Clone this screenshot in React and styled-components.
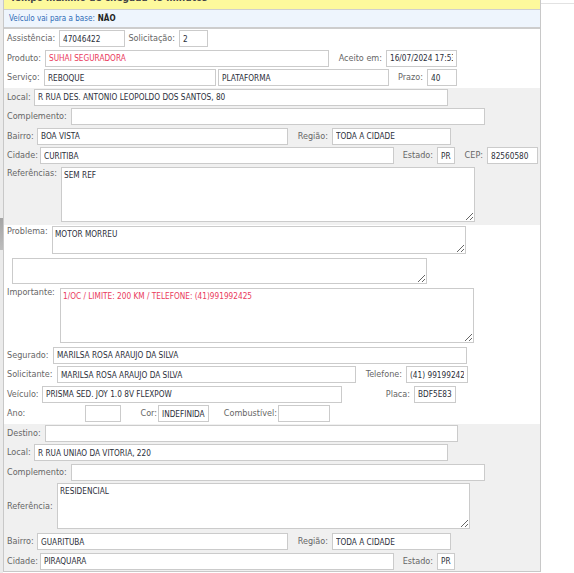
import React from "react";
import styled, { createGlobalStyle } from "styled-components";

const Global = createGlobalStyle`
  html, body { margin: 0; padding: 0; background: #fff; overflow: hidden; }
  body { font-family: "DejaVu Sans Condensed", "DejaVu Sans", sans-serif; font-size: 9px; }
`;

const Page = styled.div`
  display: flex;
  width: 574px;
  height: 573px;
`;

const SideStrip = styled.div`
  width: 3px;
  flex-shrink: 0;
  background: #ebebeb;
`;

const StripThumb = styled.div`
  margin-top: 218px;
  height: 32px;
  background: linear-gradient(#a4a4a4, #bdbdbd);
`;

const Panel = styled.div`
  width: 536px;
  flex-shrink: 0;
  border-left: 1px solid #c8c8c8;
  border-right: 1px solid #c8c8c8;
  align-self: flex-start;
`;

const RightArea = styled.div`
  flex: 1;
  margin-top: 3px;
  height: 0;
  border-top: 1px solid #e2e2e2;
`;

const Banner = styled.div`
  height: 9px;
  overflow: hidden;
  background: #fdf99c;
  border-bottom: 1px solid #cfcfcf;
`;

const BannerText = styled.div`
  margin-top: -9px;
  padding-left: 6px;
  line-height: 14px;
  font-weight: bold;
  font-size: 10px;
  color: #444;
`;

const Info = styled.div`
  height: 17px;
  display: flex;
  align-items: center;
  padding-left: 5px;
  background: #eef5fd;
  border-bottom: 2px solid #cdcdcd;
  font-size: 8px;
  color: #2f6cb8;
  b { color: #222; margin-left: 3px; }
`;

const Section = styled.div`
  background: ${(p) => (p.$gray ? "#f0f0f0" : "#fff")};
  border-bottom: ${(p) => (p.$last ? "1px solid #c8c8c8" : "none")};
`;

const Row = styled.div`
  display: flex;
  align-items: ${(p) => p.$align || "center"};
  height: ${(p) => p.$h || 19.5}px;
  padding-left: 3px;
`;

const Label = styled.div`
  width: ${(p) => p.$w}px;
  flex-shrink: 0;
  color: #666;
  white-space: nowrap;
  line-height: 11px;
  text-align: ${(p) => (p.$right ? "right" : "left")};
  padding-right: ${(p) => (p.$right ? (p.$pr ?? 4) : 0)}px;
  padding-top: ${(p) => p.$pt || 0}px;
  box-sizing: border-box;
`;

const Input = styled.input`
  width: ${(p) => p.$w}px;
  height: 17px;
  flex-shrink: 0;
  box-sizing: border-box;
  margin: 0;
  border: 1px solid #cbcbcb;
  background: #fff;
  padding: 0 3px;
  font-family: inherit;
  font-size: 8.2px;
  color: ${(p) => (p.$red ? "#ea3a5c" : "#2c2f3a")};
  outline: none;
`;

const Area = styled.textarea`
  width: ${(p) => p.$w}px;
  height: ${(p) => p.$h}px;
  flex-shrink: 0;
  box-sizing: border-box;
  margin: 1.25px 0 0 0;
  border: 1px solid #cbcbcb;
  background: #fff;
  padding: 2px 2px;
  font-family: inherit;
  font-size: 8.2px;
  line-height: 11px;
  color: ${(p) => (p.$red ? "#ea3a5c" : "#2c2f3a")};
  outline: none;
`;

const L = (props) => <Label {...props} />;

export default function App() {
  return (
    <>
      <Global />
      <Page>
        <SideStrip>
          <StripThumb />
        </SideStrip>
        <Panel>
          <Banner>
            <BannerText>Tempo máximo de chegada 45 minutos</BannerText>
          </Banner>
          <Info>
            Veículo vai para a base: <b>NÃO</b>
          </Info>

          <Section>
            <Row>
              <L $w={52}>Assistência:</L>
              <Input readOnly $w={66} value="47046422" />
              <L $w={54} $right>Solicitação:</L>
              <Input readOnly $w={29} value="2" />
            </Row>
            <Row>
              <L $w={38}>Produto:</L>
              <Input readOnly $w={284} $red value="SUHAI SEGURADORA" />
              <L $w={57} $right>Aceito em:</L>
              <Input readOnly $w={71} value="16/07/2024 17:53" />
            </Row>
            <Row>
              <L $w={37}>Serviço:</L>
              <Input readOnly $w={172} value="REBOQUE" />
              <L $w={2} />
              <Input readOnly $w={171} value="PLATAFORMA" />
              <L $w={38} $right>Prazo:</L>
              <Input readOnly $w={30} value="40" />
            </Row>
          </Section>

          <Section $gray>
            <Row>
              <L $w={27}>Local:</L>
              <Input readOnly $w={414} value="R RUA DES. ANTONIO LEOPOLDO DOS SANTOS, 80" />
            </Row>
            <Row>
              <L $w={64}>Complemento:</L>
              <Input readOnly $w={414} value="" />
            </Row>
            <Row>
              <L $w={30}>Bairro:</L>
              <Input readOnly $w={251} value="BOA VISTA" />
              <L $w={44} $right>Região:</L>
              <Input readOnly $w={119} value="TODA A CIDADE" />
            </Row>
            <Row>
              <L $w={33}>Cidade:</L>
              <Input readOnly $w={354} value="CURITIBA" />
              <L $w={43} $right>Estado:</L>
              <Input readOnly $w={18} value="PR" />
              <L $w={32} $right>CEP:</L>
              <Input readOnly $w={51} value="82560580" />
            </Row>
            <Row $h={59} $align="flex-start">
              <L $w={54} $pt={2}>Referências:</L>
              <Area readOnly $w={414} $h={55} value="SEM REF" />
            </Row>
          </Section>

          <Section>
            <Row $h={32} $align="flex-start">
              <L $w={45} $pt={1.5}>Problema:</L>
              <Area readOnly $w={414} $h={28} value="MOTOR MORREU" />
            </Row>
            <Row $h={30} $align="flex-start">
              <L $w={5} />
              <Area readOnly $w={415} $h={26} value="" />
            </Row>
            <Row $h={59} $align="flex-start">
              <L $w={53} $pt={0.5}>Importante:</L>
              <Area readOnly $w={414} $h={55} $red value="1/OC / LIMITE: 200 KM / TELEFONE: (41)991992425" />
            </Row>
            <Row>
              <L $w={46}>Segurado:</L>
              <Input readOnly $w={414} value="MARILSA ROSA ARAUJO DA SILVA" />
            </Row>
            <Row>
              <L $w={50}>Solicitante:</L>
              <Input readOnly $w={299} value="MARILSA ROSA ARAUJO DA SILVA" />
              <L $w={50} $right>Telefone:</L>
              <Input readOnly $w={62} value="(41) 991992425" />
            </Row>
            <Row>
              <L $w={35}>Veículo:</L>
              <Input readOnly $w={300} value="PRISMA SED. JOY 1.0 8V FLEXPOW" />
              <L $w={72} $right>Placa:</L>
              <Input readOnly $w={42} value="BDF5E83" />
            </Row>
            <Row>
              <L $w={78}>Ano:</L>
              <Input readOnly $w={36} value="" />
              <L $w={37} $right $pr={1}>Cor:</L>
              <Input readOnly $w={51} value="INDEFINIDA" />
              <L $w={69} $right $pr={1}>Combustível:</L>
              <Input readOnly $w={52} value="" />
            </Row>
          </Section>

          <Section $gray $last>
            <Row>
              <L $w={38}>Destino:</L>
              <Input readOnly $w={413} value="" />
            </Row>
            <Row>
              <L $w={27}>Local:</L>
              <Input readOnly $w={414} value="R RUA UNIAO DA VITORIA, 220" />
            </Row>
            <Row>
              <L $w={64}>Complemento:</L>
              <Input readOnly $w={414} value="" />
            </Row>
            <Row $h={50} $align="flex-start">
              <L $w={50} $pt={19}>Referência:</L>
              <Area readOnly $w={413} $h={46} value="RESIDENCIAL" />
            </Row>
            <Row>
              <L $w={30}>Bairro:</L>
              <Input readOnly $w={251} value="GUARITUBA" />
              <L $w={44} $right>Região:</L>
              <Input readOnly $w={119} value="TODA A CIDADE" />
            </Row>
            <Row>
              <L $w={33}>Cidade:</L>
              <Input readOnly $w={354} value="PIRAQUARA" />
              <L $w={43} $right>Estado:</L>
              <Input readOnly $w={18} value="PR" />
            </Row>
          </Section>
        </Panel>
        <RightArea />
      </Page>
    </>
  );
}
